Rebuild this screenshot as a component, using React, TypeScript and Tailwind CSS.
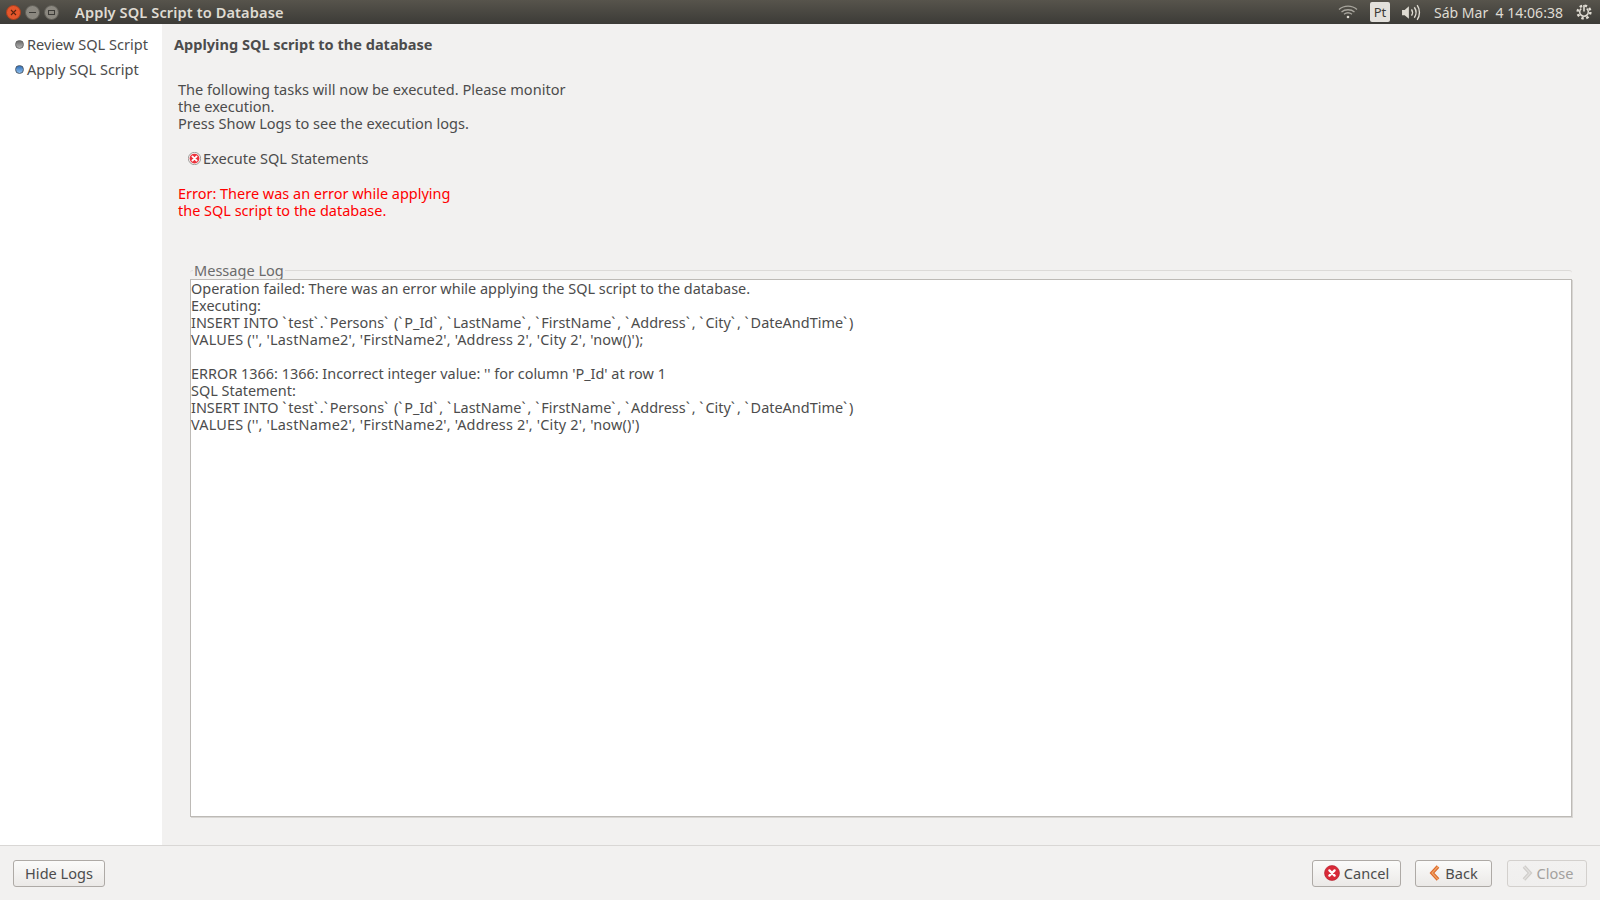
const font = "font-['Noto_Sans','Open_Sans',sans-serif]";

const logLines = [
  'Operation failed: There was an error while applying the SQL script to the database.',
  'Executing:',
  "INSERT INTO `test`.`Persons` (`P_Id`, `LastName`, `FirstName`, `Address`, `City`, `DateAndTime`)",
  "VALUES ('', 'LastName2', 'FirstName2', 'Address 2', 'City 2', 'now()');",
  '\u00a0',
  "ERROR 1366: 1366: Incorrect integer value: '' for column 'P_Id' at row 1",
  'SQL Statement:',
  "INSERT INTO `test`.`Persons` (`P_Id`, `LastName`, `FirstName`, `Address`, `City`, `DateAndTime`)",
  "VALUES ('', 'LastName2', 'FirstName2', 'Address 2', 'City 2', 'now()')",
];

// the backtick and quote are wider in the original font
function LogLine({ text }: { text: string }) {
  const parts = text.split('`');
  return (
    <div className={text.startsWith('VALUES') ? 'whitespace-pre tracking-[0.18px]' : 'whitespace-pre'}>
      {parts.map((part, i) => (
        <span key={i}>
          {part}
          {i < parts.length - 1 && <span className="tracking-[2px]">`</span>}
        </span>
      ))}
    </div>
  );
}

function ErrorIcon({ size = 16, ring }: { size?: number; ring?: boolean }) {
  return (
    <svg width={size} height={size} viewBox="0 0 16 16" className="shrink-0">
      {ring && <circle cx="8" cy="8" r="7.6" fill="#f4f3f2" stroke="#77736f" strokeWidth="0.8" />}
      <circle cx="8" cy="8" r={ring ? 6 : 7.5} fill={ring ? '#ec2f3a' : '#d82a38'} stroke={ring ? 'none' : '#b01d2a'} strokeWidth="0.6" />
      <path d="M5.4 5.4l5.2 5.2M10.6 5.4l-5.2 5.2" stroke="#fff" strokeWidth="2.3" strokeLinecap="round" />
    </svg>
  );
}

function Chevron({ dir, color, light }: { dir: 'left' | 'right'; color: string; light: string }) {
  const d = dir === 'left' ? 'M9 1.5L3 8l6 6.5' : 'M3 1.5L9 8l-6 6.5';
  return (
    <svg width="12" height="16" viewBox="0 0 12 16" className="shrink-0" fill="none">
      <path d={d} stroke={color} strokeWidth="3.6" />
      <path d={d} stroke={light} strokeWidth="1.2" />
    </svg>
  );
}

function StepDot({ active }: { active?: boolean }) {
  return (
    <span
      className={
        active
          ? 'w-[9px] h-[9px] rounded-full bg-gradient-to-b from-[#2f6fb8] to-[#8fc0ee] border border-[#4d5b6b] shrink-0'
          : 'w-[9px] h-[9px] rounded-full bg-gradient-to-b from-[#6a6a6a] to-[#b5b5b5] border border-[#666] shrink-0'
      }
    />
  );
}

function TopBar() {
  return (
    <div className="h-6 shrink-0 flex items-center bg-gradient-to-b from-[#57544c] to-[#3c3b37] text-[#dfdbd2]">
      <div className="flex items-center gap-[4px] pl-[6px]">
        <span className="w-[15px] h-[15px] rounded-full bg-[#e5562b] border border-[#a8401f] flex items-center justify-center">
          <svg width="7" height="7" viewBox="0 0 7 7"><path d="M1 1l5 5M6 1l-5 5" stroke="#5a2410" strokeWidth="1.1" /></svg>
        </span>
        <span className="w-[15px] h-[15px] rounded-full bg-[#8b8880] border border-[#5f5d56] flex items-center justify-center">
          <span className="w-[7px] h-px bg-[#3c3b37]" />
        </span>
        <span className="w-[15px] h-[15px] rounded-full bg-[#8b8880] border border-[#5f5d56] flex items-center justify-center">
          <span className="w-[7px] h-[5px] border border-[#3c3b37]" />
        </span>
      </div>
      <span className="ml-[16px] text-[14.6px] font-semibold tracking-[0.1px] leading-[22px]">Apply SQL Script to Database</span>
      <div className="ml-auto flex items-center pr-[8px]">
        <svg width="20" height="14" viewBox="0 0 20 14" className="mr-[12px]" fill="none" stroke="#a8a59d" strokeWidth="1.3">
          <path d="M1 4.5c5-4.5 13-4.5 18 0" />
          <path d="M3.5 7c3.5-3 9.5-3 13 0" />
          <path d="M6 9.3c2.3-1.8 5.7-1.8 8 0" />
          <circle cx="10" cy="12" r="1.3" fill="#dfdbd2" stroke="none" />
        </svg>
        <span className="w-5 h-5 rounded-[2px] bg-[#e3e1dc] text-[#3c3b37] text-[13px] flex items-center justify-center mr-[11px]">Pt</span>
        <svg width="21" height="17" viewBox="0 0 20 16" fill="none" stroke="#dfdbd2" strokeWidth="1.3" className="mr-[12px]">
          <path d="M1 5.5h2.5L7.5 2v12L3.5 10.5H1z" fill="#dfdbd2" stroke="none" />
          <path d="M10 5c1.2 1.8 1.2 4.2 0 6" />
          <path d="M12.7 3c2 3 2 7 0 10" />
          <path d="M15.4 1c2.9 4 2.9 10 0 14" />
        </svg>
        <span className="text-[14.05px] mr-[13px] whitespace-pre">Sáb Mar  4 14:06:38</span>
        <svg width="16" height="16" viewBox="0 0 16 16" fill="none" stroke="#dfdbd2">
          <circle cx="8" cy="8" r="6.4" strokeWidth="2.4" strokeDasharray="2.5 2.5" />
          <path d="M5.3 4.6a4.3 4.3 0 1 0 5.4 0" strokeWidth="1.5" />
          <path d="M8 1v6.5" strokeWidth="1.6" />
        </svg>
      </div>
    </div>
  );
}

function DialogButton({
  children,
  className = '',
  disabled,
}: {
  children: React.ReactNode;
  className?: string;
  disabled?: boolean;
}) {
  return (
    <button
      className={`h-[27px] rounded-[3px] border flex items-center justify-center gap-[4px] bg-gradient-to-b ${
        disabled ? 'border-[#d3d0cd] text-[#a3a19e] from-[#f2f1f0] to-[#f0efee]' : 'border-[#aeaaa6] text-[#4c4c4c] from-[#fbfbfa] to-[#ebe9e7]'
      } ${className}`}
    >
      {children}
    </button>
  );
}

export default function App() {
  return (
    <div className={`h-screen w-full flex flex-col bg-[#f2f1f0] text-[#4c4c4c] text-[14.55px] leading-[17px] overflow-hidden ${font}`}>
      <TopBar />

      <div className="flex-1 flex min-h-0">
        {/* Steps */}
        <div className="w-[162px] shrink-0 bg-white pt-[12px] pl-[15px]">
          <div className="flex items-center gap-[3px] h-[17px]">
            <StepDot />
            <span>Review SQL Script</span>
          </div>
          <div className="flex items-center gap-[3px] h-[17px] mt-[8px]">
            <StepDot active />
            <span>Apply SQL Script</span>
          </div>
        </div>

        {/* Main */}
        <div className="flex-1 flex flex-col min-w-0 pl-[12px] pr-[28px] pb-[28px]">
          <div className="mt-[12px] font-bold h-[17px]">Applying SQL script to the database</div>

          <div className="mt-[28px] ml-[4px]">
            <p>The following tasks will now be executed. Please monitor</p>
            <p>the execution.</p>
            <p>Press Show Logs to see the execution logs.</p>
          </div>

          <div className="mt-[18px] ml-[14px] flex items-center gap-[2px] h-[17px]">
            <ErrorIcon size={13} ring />
            <span>Execute SQL Statements</span>
          </div>

          <div className="mt-[18px] ml-[4px] text-[#ff0000] text-[14.48px]">
            <p>Error: There was an error while applying</p>
            <p>the SQL script to the database.</p>
          </div>

          <fieldset className="mt-[43px] ml-[16px] flex-1 flex flex-col min-h-0 border-t border-[#dcdad8] rounded-t-[3px]">
            <legend className="ml-[3px] px-px text-[#6b6b6b]">Message Log</legend>
            <div className="flex-1 bg-white border border-[#bdbab6] shadow-[1px_1px_0_#d8d6d3] text-[14.45px]">
              {logLines.map((line, i) => (
                <LogLine key={i} text={line} />
              ))}
            </div>
          </fieldset>
        </div>
      </div>

      {/* Footer */}
      <div className="h-[55px] shrink-0 border-t border-[#d9d7d5] flex items-center justify-between px-[13px]">
        <DialogButton className="w-[92px]">Hide Logs</DialogButton>
        <div className="flex items-center">
          <DialogButton className="w-[89px]">
            <ErrorIcon />
            Cancel
          </DialogButton>
          <DialogButton className="w-[77px] ml-[14px]">
            <Chevron dir="left" color="#dd6a2c" light="#f0a566" />
            Back
          </DialogButton>
          <DialogButton disabled className="w-[80px] ml-[15px]">
            <Chevron dir="right" color="#cfcdca" light="#e2e0de" />
            Close
          </DialogButton>
        </div>
      </div>
    </div>
  );
}
